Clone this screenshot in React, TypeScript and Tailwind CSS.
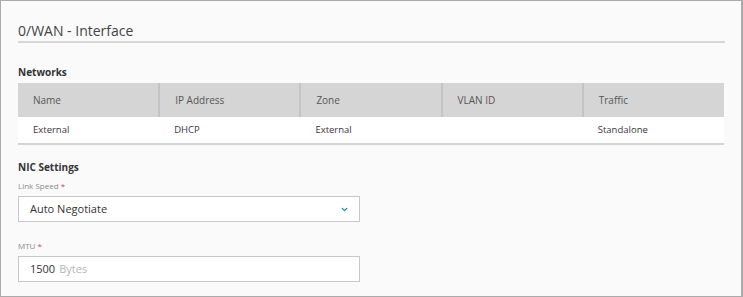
import { ChevronDown } from "lucide-react";

const COLUMNS = ["Name", "IP Address", "Zone", "VLAN ID", "Traffic"];

const ROWS = [["External", "DHCP", "External", "", "Standalone"]];

function Field({
  label,
  children,
}: {
  label: string;
  children: React.ReactNode;
}) {
  return (
    <div className="w-[342px]">
      <div className="text-[8px] leading-[10px] text-[#8a8a8a] mb-[5px]">
        {label} <span className="text-[#c0504d]">*</span>
      </div>
      {children}
    </div>
  );
}

export default function App() {
  return (
    <div
      className="w-[743px] h-[297px] bg-[#fafafa] border border-[#ababab] border-r-2 overflow-hidden"
      style={{ fontFamily: '"Open Sans", "Liberation Sans", sans-serif' }}
    >
      <div className="px-[17px] pt-[20px]">
        <h1 className="text-[14px] leading-[19px] text-[#444] pb-[1px] border-b-2 border-[#d6d6d6] w-[707px]">
          0/WAN - Interface
        </h1>

        <h2 className="mt-[22px] text-[10px] font-bold leading-[14px] text-[#333]">
          Networks
        </h2>

        <table className="mt-[4px] w-[706px] table-fixed border-collapse text-[10px]">
          <thead>
            <tr className="bg-[#d5d5d5] h-[34px]">
              {COLUMNS.map((c, i) => (
                <th
                  key={c}
                  className={`text-left font-normal text-[#555] pl-[15px] ${
                    i > 0 ? "border-l-2 border-[#c4c4c4]" : ""
                  }`}
                >
                  {c}
                </th>
              ))}
            </tr>
          </thead>
          <tbody>
            {ROWS.map((row, r) => (
              <tr key={r} className="bg-white h-[27px] border-b-2 border-[#d4d4d4]">
                {row.map((cell, i) => (
                  <td key={i} className="pl-[15px] text-[#3d3440] text-[9.5px]">
                    {cell}
                  </td>
                ))}
              </tr>
            ))}
          </tbody>
        </table>

        <h2 className="mt-[15px] text-[10px] font-bold leading-[14px] text-[#333]">
          NIC Settings
        </h2>

        <div className="mt-[7px]">
          <Field label="Link Speed">
            <div className="h-[26px] bg-white border border-[#c8c8c8] flex items-center justify-between pl-[11px] pr-[10px] text-[11px] text-[#333]">
              <span>Auto Negotiate</span>
              <ChevronDown className="size-[9px] text-[#2f8593]" strokeWidth={3.5} />
            </div>
          </Field>
        </div>

        <div className="mt-[19px]">
          <Field label="MTU">
            <div className="h-[26px] bg-white border border-[#c8c8c8] flex items-center pl-[11px] text-[11px]">
              <span className="text-[#333]">1500</span>
              <span className="ml-[4px] text-[#b5b5b5]">Bytes</span>
            </div>
          </Field>
        </div>
      </div>
    </div>
  );
}
